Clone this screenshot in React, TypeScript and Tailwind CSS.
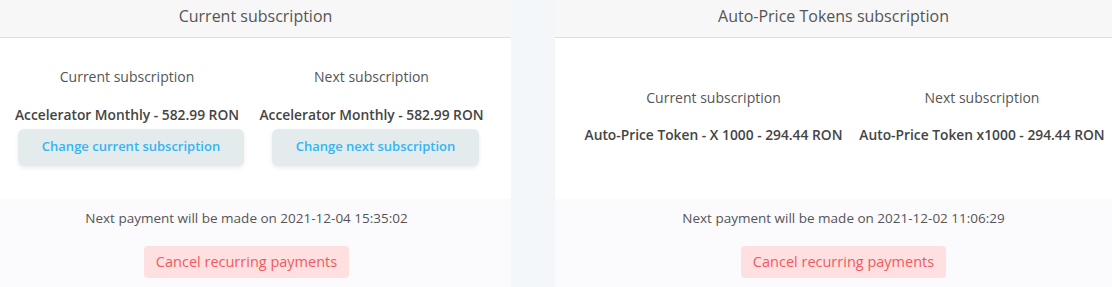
export default function App() {
  return (
    <div
      className="flex h-[287px] w-[1112px] overflow-hidden bg-[#f3f7fa]"
      style={{ fontFamily: '"Open Sans", "Noto Sans", sans-serif' }}
    >
      {/* Current subscription card */}
      <div className="flex w-[511px] flex-col bg-white">
        <div className="flex h-[38px] items-center justify-center border-b border-[#dfdfdf] bg-[#f7f7f7] pb-[5px] text-[16px] text-[#555]">
          Current subscription
        </div>
        <div className="flex h-[161px] gap-[22px] pl-[16px]">
          <div className="flex w-[222px] flex-col items-center whitespace-nowrap">
            <div className="mt-[28px] text-[14px] text-[#555]">Current subscription</div>
            <div className="mt-[18px] text-[13.8px] font-semibold text-[#444]">
              Accelerator Monthly - 582.99 RON
            </div>
            <button className="ml-2 mt-[3px] h-[37px] w-[226px] shrink-0 rounded-md bg-[#e3ebec] text-[13px] font-semibold text-[#33b5f5] shadow-[0_2px_4px_rgba(0,0,0,0.08)]">
              Change current subscription
            </button>
          </div>
          <div className="flex w-[223px] flex-col items-center whitespace-nowrap">
            <div className="mt-[28px] text-[14px] text-[#555]">Next subscription</div>
            <div className="mt-[18px] text-[13.8px] font-semibold text-[#444]">
              Accelerator Monthly - 582.99 RON
            </div>
            <button className="ml-2 mt-[3px] h-[37px] w-[207px] shrink-0 rounded-md bg-[#e3ebec] text-[13px] font-semibold text-[#33b5f5] shadow-[0_2px_4px_rgba(0,0,0,0.08)]">
              Change next subscription
            </button>
          </div>
        </div>
        <div className="flex flex-1 flex-col items-center bg-[#fbfbfd] pr-[18px]">
          <div className="mt-[9px] text-[13.5px] text-[#555]">
            Next payment will be made on 2021-12-04 15:35:02
          </div>
          <button className="mt-[18px] h-[32px] w-[205px] rounded bg-[#ffe0e1] text-[14.5px] text-[#ef5a60]">
            Cancel recurring payments
          </button>
        </div>
      </div>

      <div className="w-[44px]" />

      {/* Auto-Price Tokens card */}
      <div className="flex flex-1 flex-col bg-white">
        <div className="flex h-[38px] items-center justify-center border-b border-[#dfdfdf] bg-[#f7f7f7] pb-[5px] text-[16px] text-[#555]">
          Auto-Price Tokens subscription
        </div>
        <div className="flex h-[161px] gap-[17px] pl-[29px]">
          <div className="flex w-[259px] flex-col items-center whitespace-nowrap">
            <div className="mt-[49px] text-[14px] text-[#555]">Current subscription</div>
            <div className="mt-[17px] text-[13.8px] font-semibold text-[#444]">
              Auto-Price Token - X 1000 - 294.44 RON
            </div>
          </div>
          <div className="flex w-[244px] flex-col items-center whitespace-nowrap">
            <div className="mt-[49px] text-[14px] text-[#555]">Next subscription</div>
            <div className="mt-[17px] text-[13.8px] font-semibold text-[#444]">
              Auto-Price Token x1000 - 294.44 RON
            </div>
          </div>
        </div>
        <div className="flex flex-1 flex-col items-center bg-[#fbfbfd] pl-[20px]">
          <div className="mt-[9px] text-[13.5px] text-[#555]">
            Next payment will be made on 2021-12-02 11:06:29
          </div>
          <button className="mt-[18px] h-[32px] w-[205px] rounded bg-[#ffe0e1] text-[14.5px] text-[#ef5a60]">
            Cancel recurring payments
          </button>
        </div>
      </div>
    </div>
  );
}
